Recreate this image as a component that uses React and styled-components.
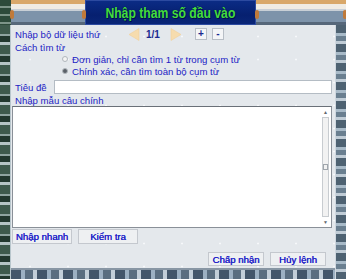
import React from "react";
import styled, { createGlobalStyle } from "styled-components";

const Global = createGlobalStyle`
  html, body { margin: 0; padding: 0; }
  body { width: 346px; height: 279px; overflow: hidden; background: #6a7a88; font-family: "Liberation Sans", Arial, sans-serif; }
`;

const Frame = styled.div`
  width: 346px;
  height: 279px;
  display: grid;
  grid-template-columns: 11px 1fr 11px;
  grid-template-rows: 25px 1fr 11px;
`;

const Header = styled.div`
  grid-column: 1 / 4;
  display: flex;
`;

const Corner = styled.div`
  width: 11px;
  flex: none;
  background: repeating-linear-gradient(180deg, #2d4a3a 0 6px, #7d9488 6px 8px);
`;

const LeftEdge = styled.div`
  grid-column: 1;
  grid-row: 2 / 4;
  background:
    repeating-linear-gradient(180deg, #3e5a4c 0 9px, #8fa4a0 9px 11px, #22382e 11px 17px, #b5c4c4 17px 20px);
  border-right: 1px solid #b8c6cc;
`;

const RightEdge = styled.div`
  grid-column: 3;
  grid-row: 2 / 4;
  background:
    repeating-linear-gradient(180deg, #4e6272 0 8px, #a8bac8 8px 11px, #6a7f90 11px 16px, #c0ccd6 16px 19px);
  border-left: 1px solid #d0d8e0;
`;

const BottomEdge = styled.div`
  grid-column: 2;
  grid-row: 3;
  background:
    repeating-linear-gradient(90deg, #43566a 0 10px, #9cb0c2 10px 14px, #5a6e80 14px 22px, #c2ced8 22px 26px);
  border-top: 2px solid #8896a4;
`;

const Plank = styled.div`
  width: ${(p) => (p.$w ? p.$w + "px" : "auto")};
  flex: ${(p) => (p.$w ? "none" : "1")};
  position: relative;
  background: linear-gradient(
    180deg,
    #d9a86a 0 4px,
    #f0ece4 4px 9px,
    #c8cfd6 9px 11px,
    #7d93aa 11px 22px,
    #56677a 22px 25px
  );
`;

const Bolt = styled.span`
  position: absolute;
  top: 10px;
  ${(p) => (p.$side === "l" ? "left: -1px;" : "right: -1px;")}
  width: 4px;
  height: 9px;
  border-radius: 2px;
  background: #c07a3a;
`;

const Banner = styled.div`
  width: 171px;
  flex: none;
  display: flex;
  align-items: center;
  justify-content: center;
  background: linear-gradient(180deg, #0b2c86 0%, #062070 60%, #0a2678 100%);
  box-shadow: inset 0 0 0 1px #2c4aa0;
`;

const Title = styled.span`
  display: inline-block;
  font-family: "Liberation Sans", Arial, sans-serif;
  font-weight: bold;
  font-size: 14.5px;
  transform: scaleX(0.84);
  white-space: nowrap;
  color: #43dd3c;
  text-shadow: 0 0 1px #02104a, 1px 1px 0 #02104a;
`;

const Content = styled.div`
  grid-column: 2;
  grid-row: 2;
  background-color: #e4e8ec;
  background-image: radial-gradient(circle, #f6f8fa 0.8px, transparent 1.2px);
  background-size: 38px 23px;
  display: flex;
  flex-direction: column;
  padding: 2px 3px 2px 1px;
  font-size: 9.6px;
  color: #1c1cc4;
`;

const Row = styled.div`
  display: flex;
  align-items: center;
  height: ${(p) => p.$h || 12}px;
  padding-left: ${(p) => p.$indent || 3}px;
  margin-top: ${(p) => p.$mt || 0}px;
`;

const Label = styled.span`
  width: ${(p) => (p.$w ? p.$w + "px" : "auto")};
  flex: none;
  white-space: nowrap;
`;

const Nav = styled.div`
  display: flex;
  align-items: center;
`;

const Counter = styled.span`
  color: #1a2a90;
  font-weight: bold;
  font-size: 10px;
  margin: 0 10px 0 6px;
`;

const SmallBtn = styled.span`
  width: 12px;
  height: 12px;
  margin-left: ${(p) => p.$ml || 0}px;
  box-sizing: border-box;
  border: 1px solid #b8bec6;
  background: #f4f5f7;
  display: flex;
  align-items: center;
  justify-content: center;
  font-weight: bold;
  font-size: 10px;
  color: #1a2a90;
  line-height: 1;
`;

const Radio = styled.span`
  width: 6px;
  height: 6px;
  border-radius: 50%;
  box-sizing: border-box;
  border: 1px solid #b0b6bc;
  background: ${(p) => (p.$on ? "#5a6068" : "#f4f4f4")};
  margin-right: 4px;
  flex: none;
`;

const Input = styled.div`
  flex: 1;
  height: 14px;
  box-sizing: border-box;
  border: 1px solid #b4bcc4;
  background: #fff;
`;

const Area = styled.div`
  height: 122px;
  box-sizing: border-box;
  border: 1px solid #8a9098;
  border-top-color: #6a7078;
  background: #fff;
  display: flex;
  justify-content: flex-end;
  padding: 2px 1px 2px 0;
`;

const ScrollBar = styled.div`
  width: 9px;
  display: flex;
  flex-direction: column;
  align-items: center;
  font-size: 5px;
  color: #606870;
`;

const Track = styled.div`
  flex: 1;
  width: 7px;
  box-sizing: border-box;
  border: 1px solid #c8ccd0;
  background: #f2f2f2;
  margin: 2px 0;
  display: flex;
  align-items: center;
  justify-content: center;
`;

const Grip = styled.span`
  width: 3px;
  height: 4px;
  border: 1px solid #a0a6ac;
`;

const BtnRow = styled.div`
  display: flex;
  justify-content: ${(p) => (p.$end ? "flex-end" : "flex-start")};
  gap: 6px;
  margin-top: ${(p) => p.$mt || 0}px;
  padding-right: ${(p) => p.$pr || 0}px;
`;

const Btn = styled.button`
  width: ${(p) => p.$w}px;
  height: ${(p) => p.$h || 15}px;
  box-sizing: border-box;
  border: 1px solid #c4c8ce;
  background: #eef0f2;
  font-family: "Liberation Sans", Arial, sans-serif;
  font-size: 9.6px;
  font-weight: normal;
  text-shadow: 0.3px 0 0 #2020c8;
  color: #2020c8;
  padding: 0;
  display: flex;
  align-items: center;
  justify-content: center;
  white-space: nowrap;
`;

const Tri = ({ dir }) => (
  <svg width="12" height="13" viewBox="0 0 12 13">
    {dir === "l" ? (
      <path d="M11 0.5 L1 6.5 L11 12.5 Z" fill="#f6dcae" stroke="#f2d09a" strokeWidth="0.6" />
    ) : (
      <path d="M1 0.5 L11 6.5 L1 12.5 Z" fill="#f6dcae" stroke="#f2d09a" strokeWidth="0.6" />
    )}
  </svg>
);

export default function App() {
  return (
    <>
      <Global />
      <Frame>
        <Header>
          <Corner />
          <Plank $w={74}>
            <Bolt $side="l" />
            <Bolt $side="r" />
          </Plank>
          <Banner>
            <Title>Nhập tham số đầu vào</Title>
          </Banner>
          <Plank>
            <Bolt $side="l" />
            <Bolt $side="r" />
          </Plank>
        </Header>
        <LeftEdge />
        <Content>
          <Row $h={14}>
            <Label $w={113}>Nhập bộ dữ liệu thứ</Label>
            <Nav>
              <Tri dir="l" />
              <Counter>1/1</Counter>
              <Tri dir="r" />
              <SmallBtn $ml={13}>+</SmallBtn>
              <SmallBtn $ml={5}>-</SmallBtn>
            </Nav>
          </Row>
          <Row $h={12}>
            <Label>Cách tìm từ</Label>
          </Row>
          <Row $h={12} $indent={50}>
            <Radio />
            <Label>Đơn giản, chỉ cần tìm 1 từ trong cụm từ</Label>
          </Row>
          <Row $h={12} $indent={50}>
            <Radio $on />
            <Label>Chính xác, cần tìm toàn bộ cụm từ</Label>
          </Row>
          <Row $h={14} $mt={3}>
            <Label $w={39}>Tiêu đề</Label>
            <Input />
          </Row>
          <Row $h={12}>
            <Label>Nhập mẫu câu chính</Label>
          </Row>
          <Area>
            <ScrollBar>
              <span>▲</span>
              <Track>
                <Grip />
              </Track>
              <span>▼</span>
            </ScrollBar>
          </Area>
          <BtnRow $mt={1}>
            <Btn $w={60}>Nhập nhanh</Btn>
            <Btn $w={60}>Kiểm tra</Btn>
          </BtnRow>
          <BtnRow $end $mt={8} $pr={6}>
            <Btn $w={56} $h={14}>Chấp nhận</Btn>
            <Btn $w={56} $h={14}>Hủy lệnh</Btn>
          </BtnRow>
        </Content>
        <RightEdge />
        <BottomEdge />
      </Frame>
    </>
  );
}
